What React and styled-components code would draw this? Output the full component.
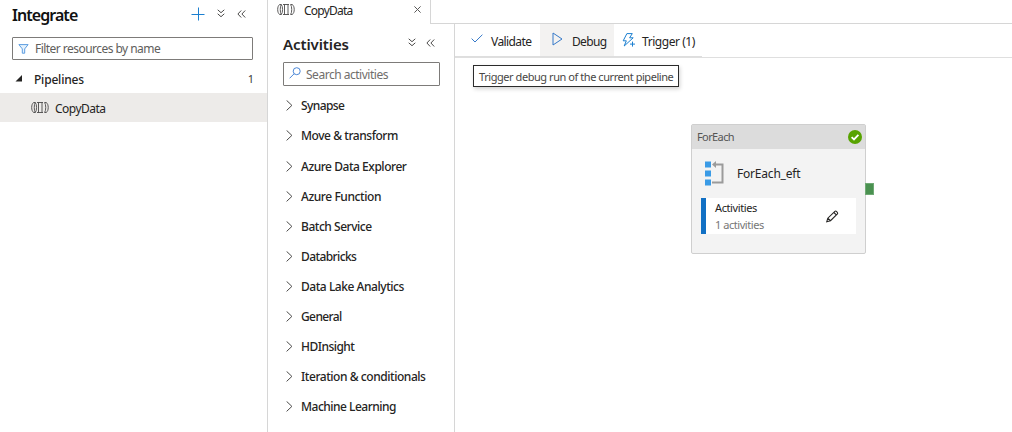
import React from "react";
import styled, { createGlobalStyle } from "styled-components";

const Global = createGlobalStyle`
  * { box-sizing: border-box; }
  body { margin: 0; background: #fff; overflow: hidden; }
  svg { display: block; flex: none; fill: none; }
`;

const Page = styled.div`
  display: flex;
  width: 1012px;
  height: 432px;
  font-family: "Noto Sans", "Open Sans", sans-serif;
  font-size: 12px;
  color: #252423;
  overflow: hidden;
`;

const Text = styled.span`
  font-size: ${(p) => p.$size || 12}px;
  font-weight: ${(p) => p.$weight || 400};
  letter-spacing: ${(p) => p.$track || 0}px;
  color: ${(p) => p.$color || "#252423"};
  line-height: 16px;
  white-space: nowrap;
`;

const Sidebar = styled.aside`
  width: 268px;
  border-right: 1px solid #d6d6d6;
`;

const SideHeader = styled.header`
  display: flex;
  align-items: center;
  height: 31px;
  padding: 0 21px 3px 12px;
`;

const TitleText = styled.div`
  padding-top: 3px;
`;

const HeaderActions = styled.div`
  display: flex;
  align-items: center;
  gap: ${(p) => p.$gap}px;
  margin-left: auto;
  padding-bottom: ${(p) => p.$lift || 0}px;
`;

const Field = styled.div`
  display: flex;
  align-items: center;
  border: 1px solid #7d7b79;
  border-radius: 1px;
  background: #fff;
`;

const FilterField = styled(Field)`
  height: 23px;
  margin: 6px 14px 0 12px;
  padding-left: 5px;
  gap: 6px;
`;

const SearchField = styled(Field)`
  height: 24px;
  margin: 5px 14px 0 15px;
  padding: 2px 0 0 5px;
  gap: 5px;
`;

const TreeGroup = styled.div`
  display: flex;
  align-items: center;
  height: 33px;
  padding: 6px 13px 0 15px;
`;

const GroupCount = styled.span`
  margin-left: auto;
  padding-bottom: 2px;
  font-size: 11px;
  color: #3b3a39;
`;

const GroupName = styled.div`
  margin-left: 11px;
`;

const TreeItem = styled.div`
  display: flex;
  align-items: center;
  gap: 6px;
  height: 29px;
  padding-left: 31px;
  background: #edebe9;
`;

const ItemName = styled.div`
  padding-top: 2px;
`;

const Main = styled.main`
  flex: 1;
  display: flex;
  flex-direction: column;
`;

const TabStrip = styled.nav`
  display: flex;
  height: 24px;
`;

const Tab = styled.div`
  display: flex;
  align-items: center;
  width: 163px;
  padding: 0 9px 5px 9px;
  border-right: 1px solid #d6d6d6;
`;

const TabName = styled.div`
  flex: 1;
  margin-left: 9px;
  padding-top: 2px;
  line-height: 16px;
`;

const TabSpace = styled.div`
  flex: 1;
  border-bottom: 1px solid #d6d6d6;
`;

const Workspace = styled.div`
  flex: 1;
  display: flex;
`;

const Activities = styled.section`
  width: 187px;
  border-right: 1px solid #d6d6d6;
`;

const ActivitiesHeader = styled.header`
  display: flex;
  align-items: center;
  height: 33px;
  padding: 7px 19px 0 15px;
`;

const ActivityList = styled.div`
  padding-top: 5px;
`;

const ActivityRow = styled.div`
  display: flex;
  align-items: center;
  gap: 8px;
  height: 30px;
  padding-left: 18px;
  margin-top: ${(p) => (p.$spaced ? 1 : 0)}px;
`;

const Editor = styled.section`
  flex: 1;
  display: flex;
  flex-direction: column;
`;

const Toolbar = styled.div`
  display: flex;
  height: 34px;
  border-bottom: 1px solid #dfdfdf;
`;

const ToolGroup = styled.div`
  display: flex;
  width: 247px;
  height: 33px;
  border-bottom: 1px solid #dedede;
`;

const ToolButton = styled.div`
  display: flex;
  align-items: center;
  gap: ${(p) => p.$gap}px;
  width: ${(p) => p.$width}px;
  padding-left: ${(p) => p.$inset}px;
  background: ${(p) => (p.$active ? "#f3f2f1" : "transparent")};
`;

const ToolName = styled.div`
  padding-top: 2px;
`;

const Canvas = styled.div`
  position: relative;
  flex: 1;
`;

const Tooltip = styled.div`
  position: absolute;
  left: 18px;
  top: 7px;
  width: 206px;
  height: 22px;
  padding: 3px 0 0 5px;
  border: 1px solid #2b2b2b;
  background: #fff;
  box-shadow: 1px 2px 4px rgba(0, 0, 0, 0.18);
  line-height: 16px;
`;

const Node = styled.article`
  position: absolute;
  left: 236px;
  top: 66px;
  width: 175px;
  height: 130px;
  border: 1px solid #cfcfcf;
  border-radius: 2px;
  background: #f3f3f3;
`;

const NodeHeader = styled.header`
  display: flex;
  align-items: center;
  justify-content: space-between;
  height: 24px;
  padding: 0 3px 0 5px;
  background: #dcdcdc;
`;

const NodeTitle = styled.div`
  display: flex;
  align-items: center;
  gap: 13px;
  height: 49px;
  padding-left: 13px;
`;

const NodeContent = styled.div`
  display: flex;
  align-items: center;
  width: 155px;
  height: 36px;
  margin-left: 9px;
  padding: 0 17px 0 9px;
  border-left: 5px solid #1170c4;
  background: #fff;
`;

const NodeLines = styled.div`
  flex: 1;
  display: flex;
  flex-direction: column;
  gap: 1px;
`;

const Port = styled.div`
  position: absolute;
  left: 410px;
  top: 125px;
  width: 9px;
  height: 12px;
  background: #4a9150;
  border: 1px solid #6fa974;
`;

const PlusIcon = () => (
  <svg width="15" height="14" stroke="#1b7fd0"><path d="M7.5 0.5v13M0.5 7.5h13" /></svg>
);
const CollapseDown = () => (
  <svg width="9" height="9" stroke="#4b4a49"><path d="M.7.8 4 3.7 7.3.8M.7 4.8 4 7.7 7.3 4.8" /></svg>
);
const CollapseLeft = () => (
  <svg width="9" height="8" stroke="#4b4a49"><path d="M4.2.5.9 4l3.3 3.5M8.2.5 4.9 4l3.3 3.5" /></svg>
);
const FilterIcon = () => (
  <svg width="11" height="10" stroke="#5c9ce0"><path d="M.9.6h9.2L6.7 4.9v4.3H4.3V4.9z" fill="#e6f2fc" /></svg>
);
const SearchSvg = styled.svg`
  margin-bottom: 5px;
`;
const SearchIcon = () => (
  <SearchSvg width="12" height="12" stroke="#4a86d6"><circle cx="7.7" cy="4.2" r="3.5" /><path d="M5.2 6.7.6 11.3" /></SearchSvg>
);
const TreeArrow = () => (
  <svg width="8" height="9"><path d="M7 0v6.5H.5z" fill="#252423" /></svg>
);
const PipelineIcon = () => (
  <svg width="18" height="11" stroke="#4b4a49" strokeWidth="0.9">
    <path d="M2.7.5C0 2 0 9 2.7 10.5M2.7.5h1.6M2.7 10.5h1.6M4.3.5C2.9 2.3 2.9 8.7 4.3 10.5M4.3.5C6 2.3 6 8.7 4.3 10.5M6 .5h6M6 10.5h6M7.5.5v10M11 .5v10M13.6.5h1.6M13.6 10.5h1.6M13.6.5c1.5 1.8 1.5 8.2 0 10M15.2.5c2.7 1.5 2.7 8.5 0 10" />
  </svg>
);
const CloseIcon = () => (
  <svg width="7" height="7" stroke="#5a5958"><path d="M.4.4l6.2 6.2M6.6.4.4 6.6" /></svg>
);
const ChevronIcon = () => (
  <svg width="7" height="12" stroke="#4b4a49"><path d="M.6.4 5.9 5.4.6 10.4" /></svg>
);
const CheckIcon = () => (
  <svg width="12" height="12" stroke="#3579c9"><path d="M.6 4.6 4 8 11.4.7" /></svg>
);
const PlayIcon = () => (
  <svg width="11" height="16" stroke="#3579c9"><path d="M1 1v12l9-6z" /></svg>
);
const TriggerIcon = () => (
  <svg width="14" height="15" stroke="#1b7fd0">
    <path d="M4.9.6h5.4L7.6 4.8h3.6L2.2 13l2.1-5.2H1.2zM10.5 8.6v5M8 11.1h5" />
  </svg>
);
const SuccessIcon = () => (
  <svg width="14" height="14"><circle cx="7" cy="7" r="7" fill="#57a300" /><path d="M3.6 7.1 6 9.4l4.4-4.5" stroke="#fff" strokeWidth="1.8" /></svg>
);
const LoopIcon = () => (
  <svg width="19" height="25">
    <path d="M0 0.5h6v6H0zM0 9.5h6v6H0zM0 18.5h6v6H0z" fill="#3a9be6" />
    <path d="M10 3.5h7.5v18H7" stroke="#9b9b9b" strokeWidth="2" />
    <path d="M7 3.5 11 0v7z" fill="#9b9b9b" />
  </svg>
);
const EditIcon = () => (
  <svg width="13" height="13" stroke="#252423" strokeWidth="1.1">
    <path d="M.8 11.7l1-3.5L8.9 1.3c1-.9 3.4 1.4 2.5 2.6L4.5 10.7zM7.9 2.5l2.4 2.3M1.8 8.2l2.7 2.5" />
  </svg>
);

const groups = [
  ["Synapse", -0.6],
  ["Move & transform", -0.45],
  ["Azure Data Explorer", -0.46],
  ["Azure Function", -0.42],
  ["Batch Service", -0.47],
  ["Databricks", -0.6],
  ["Data Lake Analytics", -0.46],
  ["General", -0.6],
  ["HDInsight", -0.53],
  ["Iteration & conditionals", -0.45],
  ["Machine Learning", -0.5],
];

export default function App() {
  return (
    <Page>
      <Global />
      <Sidebar>
        <SideHeader>
          <TitleText><Text $size={16} $weight={600} $track={-0.95} $color="#111">Integrate</Text></TitleText>
          <HeaderActions $gap={11} $lift={1}>
            <PlusIcon />
            <CollapseDown />
            <CollapseLeft />
          </HeaderActions>
        </SideHeader>
        <FilterField>
          <FilterIcon />
          <Text $track={-0.54} $color="#605e5c">Filter resources by name</Text>
        </FilterField>
        <TreeGroup>
          <TreeArrow />
          <GroupName><Text $weight={500} $track={-0.2}>Pipelines</Text></GroupName>
          <GroupCount>1</GroupCount>
        </TreeGroup>
        <TreeItem>
          <PipelineIcon />
          <ItemName><Text $track={-0.52}>CopyData</Text></ItemName>
        </TreeItem>
      </Sidebar>
      <Main>
        <TabStrip>
          <Tab>
            <PipelineIcon />
            <TabName><Text $track={-0.78}>CopyData</Text></TabName>
            <CloseIcon />
          </Tab>
          <TabSpace />
        </TabStrip>
        <Workspace>
          <Activities>
            <ActivitiesHeader>
              <Text $size={15} $weight={600} $track={-0.1}>Activities</Text>
              <HeaderActions $gap={9} $lift={3}>
                <CollapseDown />
                <CollapseLeft />
              </HeaderActions>
            </ActivitiesHeader>
            <SearchField>
              <SearchIcon />
              <Text $track={-0.48} $color="#706e6c">Search activities</Text>
            </SearchField>
            <ActivityList>
              {groups.map(([name, track], i) => (
                <ActivityRow key={name} $spaced={i === 2}>
                  <ChevronIcon />
                  <Text $weight={500} $track={track}>{name}</Text>
                </ActivityRow>
              ))}
            </ActivityList>
          </Activities>
          <Editor>
            <Toolbar>
              <ToolGroup>
                <ToolButton $width={85} $inset={16} $gap={8}>
                  <CheckIcon />
                  <ToolName><Text $track={-0.58}>Validate</Text></ToolName>
                </ToolButton>
                <ToolButton $width={74} $inset={12} $gap={9} $active>
                  <PlayIcon />
                  <ToolName><Text $track={-0.65}>Debug</Text></ToolName>
                </ToolButton>
                <ToolButton $width={88} $inset={8} $gap={6}>
                  <TriggerIcon />
                  <ToolName><Text $track={-0.44}>Trigger (1)</Text></ToolName>
                </ToolButton>
              </ToolGroup>
            </Toolbar>
            <Canvas>
              <Tooltip><Text $size={11} $track={-0.44} $color="#484644">Trigger debug run of the current pipeline</Text></Tooltip>
              <Node>
                <NodeHeader>
                  <Text $size={11} $track={-0.6} $color="#555">ForEach</Text>
                  <SuccessIcon />
                </NodeHeader>
                <NodeTitle>
                  <LoopIcon />
                  <Text $track={-0.2}>ForEach_eft</Text>
                </NodeTitle>
                <NodeContent>
                  <NodeLines>
                    <Text $size={11} $track={-0.4}>Activities</Text>
                    <Text $size={11} $track={-0.45} $color="#777">1 activities</Text>
                  </NodeLines>
                  <EditIcon />
                </NodeContent>
              </Node>
              <Port />
            </Canvas>
          </Editor>
        </Workspace>
      </Main>
    </Page>
  );
}
